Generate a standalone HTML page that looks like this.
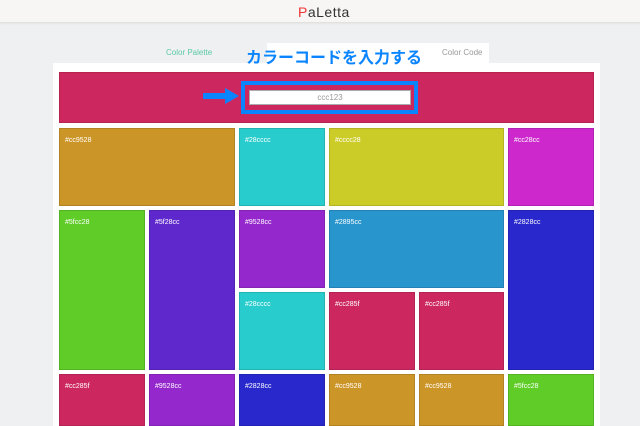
<!DOCTYPE html><html style="width:640px;height:426px;overflow:hidden"><head><meta charset="utf-8"><style>
body{margin:0;width:640px;height:426px;overflow:hidden;background:#eff0f2;font-family:"Liberation Sans","Noto Sans CJK JP",sans-serif;position:relative}
.hdr{position:absolute;left:0;top:0;width:640px;height:22px;background:#f7f6f4;border-bottom:1px solid #e2e1de;box-shadow:0 1px 2px rgba(0,0,0,.05)}
.logo{position:absolute;left:298px;top:4px;font-size:14px;color:#333;letter-spacing:.5px}
.panel{position:absolute;left:53px;top:63px;width:547px;height:363px;background:#fff}
.tab{position:absolute;left:267px;top:43px;width:222px;height:21px;background:#fff}
.t{position:absolute;font-size:8px}
.banner{position:absolute;left:59px;top:72px;width:535px;height:51px;background:#cc285f;border:1px solid #b8224f;box-sizing:border-box}
.box{position:absolute;left:241px;top:81px;width:177px;height:33px;border:4px solid #0a84ff;box-sizing:border-box}
.inp{position:absolute;left:249px;top:90px;width:162px;height:15px;background:#fff;border:1px solid #aaa;box-sizing:border-box;text-align:center;font-size:8px;color:#999;line-height:13px}
.c{position:absolute;box-sizing:border-box;border:1px solid rgba(0,0,0,.12);color:#fff;font-size:7px;padding:8px 0 0 5px}
</style></head><body>
<div class="hdr"><div class="logo"><span style="color:#e33">P</span>aLetta</div></div>
<div class="tab"></div>
<div class="t" style="left:166px;top:48px;color:#5bc8a8">Color Palette</div>
<div class="t" style="left:442px;top:48px;color:#999">Color Code</div>
<div class="panel"></div>
<div style="position:absolute;left:246px;top:44px;font-size:16px;font-weight:bold;color:#0a84ff">カラーコードを入力する</div>
<div class="banner"></div>
<div class="box"></div>
<div class="inp">ccc123</div>
<svg style="position:absolute;left:203px;top:87px" width="38" height="18"><path d="M0 6h22v-5l14 8-14 8v-5H0z" fill="#0a84ff"/></svg>
<div class="c" style="left:59px;top:128px;width:176px;height:78px;background:#cc9528">#cc9528</div>
<div class="c" style="left:239px;top:128px;width:86px;height:78px;background:#28cccc">#28cccc</div>
<div class="c" style="left:329px;top:128px;width:175px;height:78px;background:#cccc28">#cccc28</div>
<div class="c" style="left:508px;top:128px;width:86px;height:78px;background:#cc28cc">#cc28cc</div>
<div class="c" style="left:59px;top:210px;width:86px;height:160px;background:#5fcc28">#5fcc28</div>
<div class="c" style="left:149px;top:210px;width:86px;height:160px;background:#5f28cc">#5f28cc</div>
<div class="c" style="left:239px;top:210px;width:86px;height:78px;background:#9528cc">#9528cc</div>
<div class="c" style="left:329px;top:210px;width:175px;height:78px;background:#2895cc">#2895cc</div>
<div class="c" style="left:508px;top:210px;width:86px;height:160px;background:#2828cc">#2828cc</div>
<div class="c" style="left:239px;top:292px;width:86px;height:78px;background:#28cccc">#28cccc</div>
<div class="c" style="left:329px;top:292px;width:86px;height:78px;background:#cc285f">#cc285f</div>
<div class="c" style="left:419px;top:292px;width:85px;height:78px;background:#cc285f">#cc285f</div>
<div class="c" style="left:59px;top:374px;width:86px;height:52px;background:#cc285f">#cc285f</div>
<div class="c" style="left:149px;top:374px;width:86px;height:52px;background:#9528cc">#9528cc</div>
<div class="c" style="left:239px;top:374px;width:86px;height:52px;background:#2828cc">#2828cc</div>
<div class="c" style="left:329px;top:374px;width:86px;height:52px;background:#cc9528">#cc9528</div>
<div class="c" style="left:419px;top:374px;width:85px;height:52px;background:#cc9528">#cc9528</div>
<div class="c" style="left:508px;top:374px;width:86px;height:52px;background:#5fcc28">#5fcc28</div>
</body></html>
